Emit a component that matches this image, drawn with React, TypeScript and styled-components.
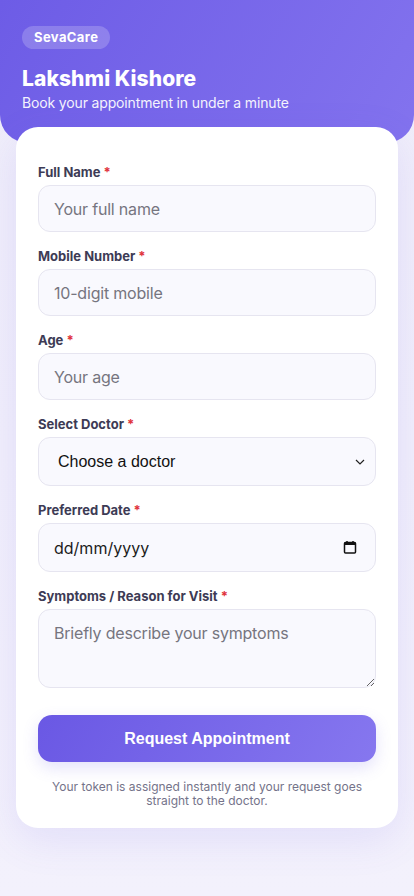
import React from "react";
import styled, { createGlobalStyle } from "styled-components";

const GlobalStyle = createGlobalStyle`
  * { box-sizing: border-box; }
  body {
    margin: 0;
    background: #f3f1fc;
    font-family: Inter, "Noto Sans", sans-serif;
    color: #2d2b45;
  }
`;

const fields = [
  { label: "Full Name", placeholder: "Your full name", type: "text" },
  { label: "Mobile Number", placeholder: "10-digit mobile", type: "tel" },
  { label: "Age", placeholder: "Your age", type: "text" },
];

export default function App() {
  const [form, setForm] = React.useState<Record<string, string>>({});

  const update = (key: string) => (
    e: React.ChangeEvent<HTMLInputElement | HTMLSelectElement | HTMLTextAreaElement>
  ) => setForm({ ...form, [key]: e.target.value });

  return (
    <Page>
      <GlobalStyle />
      <Header>
        <Badge>SevaCare</Badge>
        <Title>Lakshmi Kishore</Title>
        <Subtitle>Book your appointment in under a minute</Subtitle>
      </Header>
      <Card
        onSubmit={(e) => {
          e.preventDefault();
        }}
      >
        {fields.map((f) => (
          <Field key={f.label}>
            <Label>
              {f.label} <Req>*</Req>
            </Label>
            <Input
              type={f.type}
              placeholder={f.placeholder}
              value={form[f.label] || ""}
              onChange={update(f.label)}
            />
          </Field>
        ))}
        <Field>
          <Label>
            Select Doctor <Req>*</Req>
          </Label>
          <SelectWrap>
            <Select value={form.doctor || ""} onChange={update("doctor")}>
              <option value="">Choose a doctor</option>
              <option value="lakshmi">Dr. Lakshmi Kishore</option>
            </Select>
            <Chevron viewBox="0 0 10 6" width="10" height="6">
              <path d="M1 1l4 4 4-4" fill="none" stroke="#222" strokeWidth="1.2" />
            </Chevron>
          </SelectWrap>
        </Field>
        <Field>
          <Label>
            Preferred Date <Req>*</Req>
          </Label>
          <SelectWrap>
            <DateInput
              type="text"
              placeholder="dd/mm/yyyy"
              value={form.date || ""}
              onChange={update("date")}
            />
            <CalIcon viewBox="0 0 14 14" width="14" height="14">
              <rect x="1.5" y="2.5" width="11" height="10.5" rx="1" fill="none" stroke="#111" strokeWidth="1.5" />
              <rect x="1.5" y="2.5" width="11" height="2.5" fill="#111" />
              <path d="M4 1v2M10 1v2" stroke="#111" strokeWidth="1.5" />
            </CalIcon>
          </SelectWrap>
        </Field>
        <Field>
          <Label>
            Symptoms / Reason for Visit <Req>*</Req>
          </Label>
          <TextArea
            placeholder="Briefly describe your symptoms"
            value={form.symptoms || ""}
            onChange={update("symptoms")}
          />
        </Field>
        <SubmitButton type="submit">Request Appointment</SubmitButton>
        <Note>
          Your token is assigned instantly and your request goes straight to the doctor.
        </Note>
      </Card>
    </Page>
  );
}

const Page = styled.div`
  min-height: 896px;
  background: linear-gradient(180deg, #efedfa 0%, #f3f1fc 100%);
  padding-bottom: 68px;
`;

const Header = styled.header`
  background: linear-gradient(120deg, #6d5ce6 0%, #8373ee 100%);
  padding: 26px 22px 31px;
  border-radius: 0 0 28px 28px;
  color: #fff;
`;

const Badge = styled.span`
  display: inline-block;
  padding: 4px 12px;
  border-radius: 999px;
  background: rgba(255, 255, 255, 0.2);
  font-size: 13px;
  line-height: 15px;
  font-weight: 700;
  letter-spacing: 0.4px;
`;

const Title = styled.h1`
  margin: 18px 0 0;
  font-size: 21px;
  line-height: 24px;
  font-weight: 800;
  letter-spacing: 0.1px;
`;

const Subtitle = styled.p`
  margin: 3px 0 0;
  font-size: 14px;
  line-height: 18px;
  letter-spacing: -0.15px;
  opacity: 0.92;
`;

const Card = styled.form`
  margin: -16px 16px 0;
  background: #fff;
  border-radius: 22px;
  padding: 37px 22px 20px;
  box-shadow: 0 12px 40px rgba(108, 92, 231, 0.12);
  display: flex;
  flex-direction: column;
`;

const Field = styled.div`
  display: flex;
  flex-direction: column;
  margin-bottom: 16px;
`;

const Label = styled.label`
  font-size: 13px;
  line-height: 16px;
  font-weight: 700;
  color: #3d3b55;
  margin-bottom: 5px;
`;

const Req = styled.span`
  color: #e0323c;
`;

const fieldBase = `
  width: 100%;
  border: 1.5px solid #e6e5f0;
  border-radius: 12px;
  background: #f9f9fe;
  font-size: 16px;
  color: #222;
  outline: none;
  padding: 0 15px;
`;

const Input = styled.input`
  ${fieldBase}
  height: 47px;
  font-family: Inter, "Noto Sans", sans-serif;
  letter-spacing: -0.2px;
  &::placeholder {
    color: #76757f;
  }
`;

const SelectWrap = styled.div`
  position: relative;
`;

const Select = styled.select`
  ${fieldBase}
  height: 49px;
  padding-left: 19px;
  appearance: none;
  font-family: "Liberation Sans", Arial, sans-serif;
  color: #111;
`;

const Chevron = styled.svg`
  position: absolute;
  right: 11px;
  top: 22px;
  pointer-events: none;
`;

const DateInput = styled.input`
  ${fieldBase}
  height: 49px;
  font-family: Inter, "Noto Sans", sans-serif;
  &::placeholder {
    color: #1c1c1c;
  }
`;

const CalIcon = styled.svg`
  position: absolute;
  right: 19px;
  top: 17px;
  pointer-events: none;
`;

const TextArea = styled.textarea`
  ${fieldBase}
  height: 79px;
  padding: 13px 15px;
  resize: vertical;
  font-family: Inter, "Noto Sans", sans-serif;
  letter-spacing: -0.2px;
  line-height: 20px;
  &::placeholder {
    color: #76757f;
  }
`;

const SubmitButton = styled.button`
  margin-top: 11px;
  height: 47px;
  border: none;
  border-radius: 14px;
  background: linear-gradient(120deg, #6a58e4 0%, #8677ef 100%);
  color: #fff;
  font-family: "Liberation Sans", Arial, sans-serif;
  font-size: 16px;
  font-weight: 700;
  cursor: pointer;
  box-shadow: 0 6px 16px rgba(108, 92, 231, 0.18);
`;

const Note = styled.p`
  margin: 18px 6px 0;
  text-align: center;
  font-size: 12px;
  line-height: 14px;
  color: #74738a;
`;
